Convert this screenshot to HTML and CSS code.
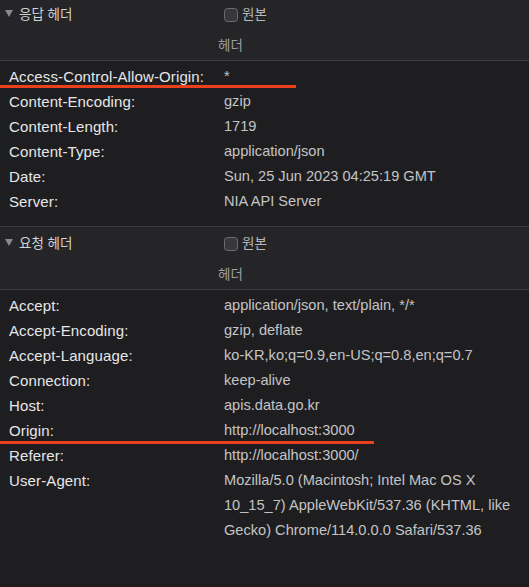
FILE: index.html
```html
<!DOCTYPE html>
<html lang="ko">
<head>
<meta charset="utf-8">
<link rel="stylesheet" href="styles.css">
</head>
<body>
<div class="panel">
  <section class="group group-first">
    <div class="group-head">
      <div class="toggle-row">
        <div class="toggle"><span class="caret"></span><span class="title">응답 헤더</span></div>
        <div class="raw"><span class="box"></span><span>원본</span></div>
      </div>
      <div class="sub">헤더</div>
    </div>
    <div class="rows">
      <div class="row"><span class="k">Access-Control-Allow-Origin:</span><span class="v">*</span><span class="mark mark-acao"></span></div>
      <div class="row"><span class="k">Content-Encoding:</span><span class="v">gzip</span></div>
      <div class="row"><span class="k">Content-Length:</span><span class="v">1719</span></div>
      <div class="row"><span class="k">Content-Type:</span><span class="v">application/json</span></div>
      <div class="row"><span class="k">Date:</span><span class="v">Sun, 25 Jun 2023 04:25:19 GMT</span></div>
      <div class="row"><span class="k">Server:</span><span class="v">NIA API Server</span></div>
    </div>
  </section>
  <section class="group">
    <div class="group-head">
      <div class="toggle-row">
        <div class="toggle"><span class="caret"></span><span class="title">요청 헤더</span></div>
        <div class="raw"><span class="box"></span><span>원본</span></div>
      </div>
      <div class="sub">헤더</div>
    </div>
    <div class="rows">
      <div class="row"><span class="k">Accept:</span><span class="v">application/json, text/plain, */*</span></div>
      <div class="row"><span class="k">Accept-Encoding:</span><span class="v">gzip, deflate</span></div>
      <div class="row"><span class="k">Accept-Language:</span><span class="v">ko-KR,ko;q=0.9,en-US;q=0.8,en;q=0.7</span></div>
      <div class="row"><span class="k">Connection:</span><span class="v">keep-alive</span></div>
      <div class="row"><span class="k">Host:</span><span class="v">apis.data.go.kr</span></div>
      <div class="row"><span class="k">Origin:</span><span class="v">http://localhost:3000</span><span class="mark mark-origin"></span></div>
      <div class="row"><span class="k">Referer:</span><span class="v">http://localhost:3000/</span></div>
      <div class="row"><span class="k">User-Agent:</span><span class="v">Mozilla/5.0 (Macintosh; Intel Mac OS X 10_15_7) AppleWebKit/537.36 (KHTML, like Gecko) Chrome/114.0.0.0 Safari/537.36</span></div>
    </div>
  </section>
</div>
</body>
</html>
```

FILE: styles.css
```css
html, body {
  margin: 0;
  padding: 0;
}
body {
  background: #1e1e20;
  width: 529px;
  height: 587px;
  overflow: hidden;
  font-family: "Liberation Sans", Arial, "Noto Sans CJK KR", sans-serif;
}
.panel {
  display: flex;
  flex-direction: column;
}
.group-first {
  margin-top: -2px;
}
.group + .group .group-head {
  border-top: 1px solid #3c3c3f;
}
.group-head {
  background: #252528;
  border-bottom: 1px solid #3c3c3f;
}
.toggle-row {
  height: 30px;
  display: grid;
  grid-template-columns: 224px 1fr;
  align-items: center;
}
.toggle {
  display: flex;
  align-items: center;
  padding-left: 5px;
}
.caret {
  width: 0;
  height: 0;
  border-left: 4px solid transparent;
  border-right: 4px solid transparent;
  border-top: 7px solid #8a8a8c;
  margin-right: 6px;
  margin-top: 1px;
}
.title {
  font-family: "Noto Sans CJK KR", sans-serif;
  font-size: 13.5px;
  color: #d2d2d4;
}
.raw {
  display: flex;
  align-items: center;
  font-family: "Noto Sans CJK KR", sans-serif;
  font-size: 13.5px;
  color: #b8b8ba;
}
.box {
  box-sizing: border-box;
  width: 14px;
  height: 14px;
  border: 1.5px solid #6c6c6e;
  border-radius: 3.5px;
  background: #38383a;
  margin-right: 4px;
  margin-top: 3px;
}
.sub {
  height: 32px;
  line-height: 32px;
  padding-left: 218px;
  font-family: "Noto Sans CJK KR", sans-serif;
  font-size: 13.5px;
  color: #9e9ea0;
}
.rows {
  padding: 3px 0 12px;
}
.row {
  position: relative;
  display: grid;
  grid-template-columns: 224px 1fr;
  line-height: 25px;
}
.k {
  padding-left: 9px;
  font-size: 15px;
  letter-spacing: 0.12px;
  color: #e6e6e8;
}
.v {
  font-size: 14.6px;
  color: #c4c4c6;
}
.mark {
  position: absolute;
  left: 0;
  height: 3px;
  background: #ec3f1c;
}
.mark-acao {
  top: 21px;
  width: 296px;
}
.mark-origin {
  top: 23px;
  width: 374px;
}
```
